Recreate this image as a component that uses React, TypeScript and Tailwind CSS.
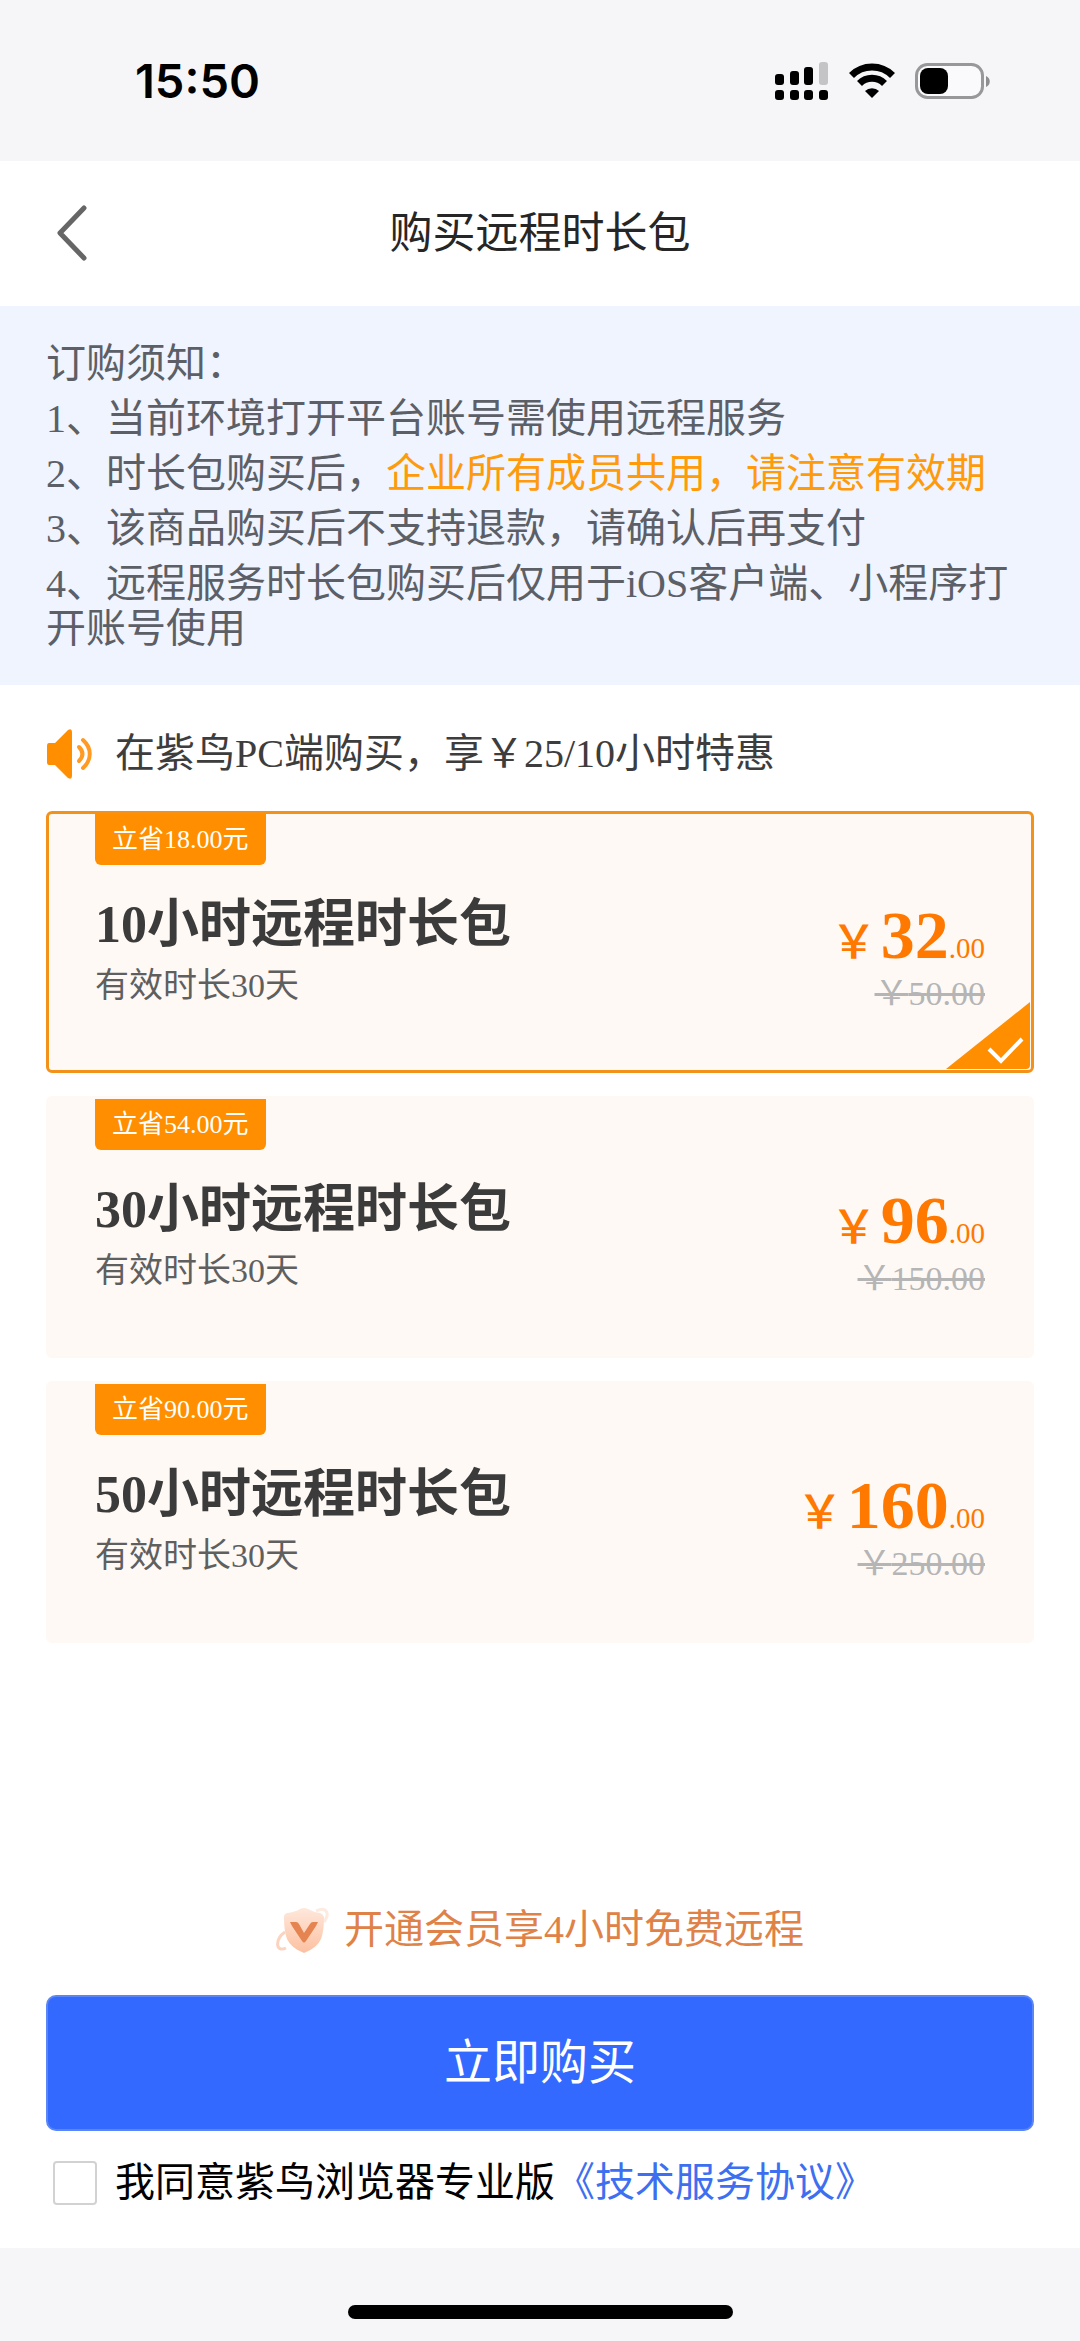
import { useState } from "react";

const packs = [
  { id: "h10", hours: 10, save: "18.00", price: "32", origin: "50.00" },
  { id: "h30", hours: 30, save: "54.00", price: "96", origin: "150.00" },
  { id: "h50", hours: 50, save: "90.00", price: "160", origin: "250.00" },
];

function StatusBar() {
  return (
    <div className="flex h-[161px] items-center justify-between bg-[#f6f6f9] pr-[89px] pl-[135px]">
      <span className="font-['Inter',sans-serif] text-[47px] leading-none font-semibold text-black">
        15:50
      </span>
      <div className="flex items-center gap-5">
        <svg width="54" height="38" viewBox="0 0 54 38" aria-hidden="true">
          <rect x="0" y="12" width="9" height="11" rx="3" />
          <rect x="15" y="9" width="9" height="14" rx="3" />
          <rect x="29" y="5" width="9" height="18" rx="3" />
          <rect x="44" y="0" width="9" height="23" rx="3" fill="#c4c4c6" />
          <rect x="0" y="28" width="9" height="10" rx="3" />
          <rect x="15" y="28" width="9" height="10" rx="3" />
          <rect x="29" y="28" width="9" height="10" rx="3" />
          <rect x="44" y="28" width="9" height="10" rx="3" />
        </svg>
        <svg width="46" height="36" viewBox="0 0 46 36" aria-hidden="true">
          <g fill="none" stroke="#000" strokeWidth="7">
            <path d="M2.500 12.500a29 29 0 0 1 41 0" />
            <path d="M10.500 20.500a17.700 17.700 0 0 1 25 0" />
          </g>
          <path d="M23 35l-7-7a10 10 0 0 1 14 0z" />
        </svg>
        <svg width="76" height="36" viewBox="0 0 76 36" aria-hidden="true">
          <rect x="1.500" y="1.500" width="66" height="33" rx="11" fill="#fafafc" stroke="#98989a" strokeWidth="3" />
          <rect x="5" y="5" width="28" height="26" rx="8" />
          <path d="M71 13c5 2 5 9 0 11z" fill="#8e8e90" />
        </svg>
      </div>
    </div>
  );
}

function Header() {
  return (
    <header className="grid h-[145px] grid-cols-[1fr_auto_1fr] items-center bg-white px-[52px]">
      <button type="button" aria-label="返回" className="justify-self-start">
        <svg width="40" height="60" viewBox="0 0 40 60" fill="none" stroke="#666" strokeWidth="5" strokeLinecap="round" strokeLinejoin="round">
          <path d="M32 4L8 29L32 54" />
        </svg>
      </button>
      <h1 className="text-[43px] leading-none text-[#262626]">购买远程时长包</h1>
    </header>
  );
}

function Notice() {
  return (
    <section className="flex flex-col gap-2.5 bg-[#eff4ff] px-[46px] pt-[35px] pb-[34px] text-[40px] leading-[45px] text-[#5c5f66]">
      <p>订购须知：</p>
      <p>1、当前环境打开平台账号需使用远程服务</p>
      <p>
        2、时长包购买后，
        <span className="text-[#ff9a0a]">企业所有成员共用，请注意有效期</span>
      </p>
      <p>3、该商品购买后不支持退款，请确认后再支付</p>
      <p>4、远程服务时长包购买后仅用于iOS客户端、小程序打开账号使用</p>
    </section>
  );
}

function Promo() {
  return (
    <div className="flex items-center gap-[23px] pt-11 pb-8 text-[40px] leading-9 text-[#3d3d3d]">
      <svg width="46" height="50" viewBox="0 0 46 50" aria-hidden="true">
        <path d="M3 14h6L22 1q4-2 4 2v44q0 4-4 2L9 36H3q-2 0-2-3V17q0-3 2-3z" fill="#ff8f00" />
        <g fill="none" stroke="#ff9a22" strokeLinecap="round">
          <path d="M33 18q7 7 0 14" strokeWidth="4" />
          <path d="M37 11c9 8 9 20 0 28" strokeWidth="4" />
        </g>
      </svg>
      <p>在紫鸟PC端购买，享￥25/10小时特惠</p>
    </div>
  );
}

function PackCard({
  pack,
  selected,
  onSelect,
}: {
  pack: (typeof packs)[number];
  selected: boolean;
  onSelect: () => void;
}) {
  return (
    <button
      type="button"
      aria-pressed={selected}
      onClick={onSelect}
      className={`relative flex w-full justify-between rounded-md border-3 bg-[#fef9f5] px-[46px] pb-[55px] text-left ${
        selected ? "border-[#f3921b]" : "border-transparent"
      }`}
    >
      <span className="flex flex-col items-start">
        <span className="rounded-b-md bg-[#ff8f00] px-[17px] text-[26px] leading-[51px] text-white">
          立省{pack.save}元
        </span>
        <span className="mt-[30px] text-[52px] leading-[60px] font-bold text-[#3b3b3b]">
          {pack.hours}小时远程时长包
        </span>
        <span className="mt-2.5 text-[34px] leading-[42px] text-[#5f5f5f]">有效时长30天</span>
      </span>
      <span className="flex flex-col items-end pt-[87px]">
        <span className="flex items-baseline leading-none text-[#ff7800]">
          <span className="mr-1 text-[46px] font-medium">￥</span>
          <b className="text-[68px]">{pack.price}</b>
          <span className="text-[29px]">.00</span>
        </span>
        <s className="mt-1 text-[34px] leading-[42px] text-[#b5b5b5]">￥{pack.origin}</s>
      </span>
      {selected && (
        <svg width="84" height="67" viewBox="0 0 84 67" className="absolute right-px bottom-px" aria-hidden="true">
          <path d="M84 0v63q0 4-4 4H0z" fill="#ff8f00" />
          <path d="M43 47l12 12L76 37" fill="none" stroke="#fff" strokeWidth="4" />
        </svg>
      )}
    </button>
  );
}

function VipIcon() {
  return (
    <svg width="54" height="46" viewBox="0 0 54 46" aria-hidden="true">
      <defs>
        <linearGradient id="shield" x1="0" y1="0" x2="0" y2="1">
          <stop offset="0" stopColor="#fee8dc" />
          <stop offset="1" stopColor="#fcc0a0" />
        </linearGradient>
      </defs>
      <path d="M9 25C-1 32-1 46 10 41" fill="none" stroke="#fbd3bf" strokeWidth="3" />
      <path d="M40 4c11-5 14 3 8 11" fill="none" stroke="#fdeae1" strokeWidth="3" />
      <path d="M8 10q0-3 3-4 8-1 13-4 4-2 8 0 5 3 12 4 3 1 4 4 0 14-3 22-4 9-17 14-13-5-17-14Q8 24 8 10z" fill="url(#shield)" />
      <path d="M14 15h6q2 0 3 2l5 9 6-9q1-2 3-2h5q-1 2-2 4L30 34q-2 3-4 0L16 19q-1-2-2-4z" fill="#e58450" />
    </svg>
  );
}

export default function App() {
  const [selected, setSelected] = useState("h10");
  const [agreed, setAgreed] = useState(false);

  return (
    <div className="flex min-h-screen flex-col bg-white font-['Liberation_Serif','Noto_Sans_CJK_SC',serif]">
      <StatusBar />
      <Header />
      <Notice />

      <main className="flex flex-1 flex-col px-[46px]">
        <Promo />
        <div className="flex flex-col gap-[23px]">
          {packs.map((pack) => (
            <PackCard
              key={pack.id}
              pack={pack}
              selected={pack.id === selected}
              onSelect={() => setSelected(pack.id)}
            />
          ))}
        </div>

        <div className="mt-auto flex flex-col pb-[42px]">
          <a href="#vip" className="flex items-center justify-center gap-3.5 text-[40px] leading-[46px] text-[#df8248]">
            <VipIcon />
            开通会员享4小时免费远程
          </a>
          <button type="button" className="mt-[42px] h-[136px] rounded-[10px] border-2 border-[#5b86f5] bg-[#3369ff] text-[48px] text-white">
            立即购买
          </button>
          <div className="mt-[29px] flex items-center text-[40px] leading-[46px] text-black">
            <input
              id="agree"
              type="checkbox"
              checked={agreed}
              onChange={(e) => setAgreed(e.target.checked)}
              className="mr-[18px] ml-[7px] size-[44px] appearance-none rounded-sm border-2 border-[#d2d2d2] bg-white checked:bg-[#3369ff]"
            />
            <label htmlFor="agree">我同意紫鸟浏览器专业版</label>
            <a href="#terms" className="text-[#3d6ff0]">
              《技术服务协议》
            </a>
          </div>
        </div>
      </main>

      <footer className="flex h-[93px] items-end justify-center bg-[#f6f6f9] pb-[22px]">
        <div className="h-3.5 w-[385px] rounded-full bg-black" />
      </footer>
    </div>
  );
}
